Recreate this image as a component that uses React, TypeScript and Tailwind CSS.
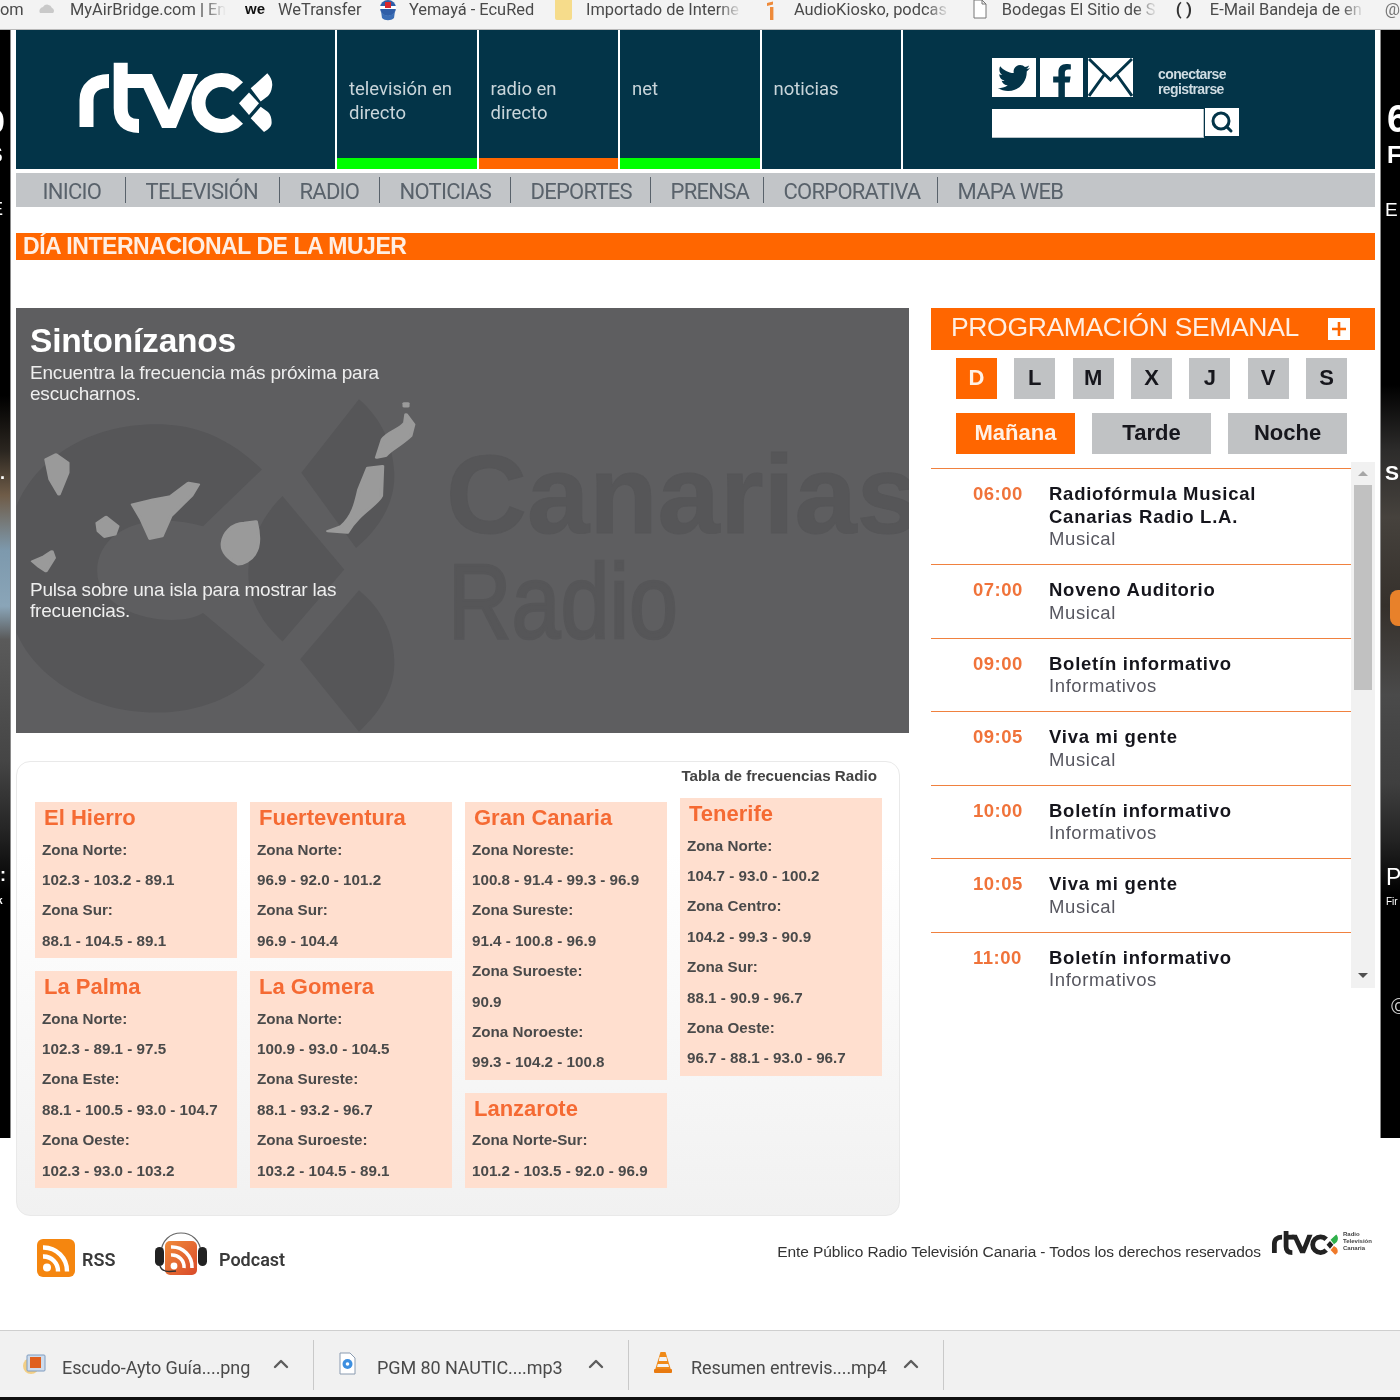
import React from "react";
import { FaTwitter, FaFacebookF } from "react-icons/fa";
import { Search, ChevronUp } from "lucide-react";

const SANS = "font-['Liberation_Sans',Arial,sans-serif]";
const UI = "font-['Roboto','Noto_Sans',sans-serif]";

function Logo({ className, letters, top, mid, bottom }: { className: string; letters: string; top: string; mid: string; bottom: string }) {
  return (
    <svg viewBox="0 0 198 76" className={className} aria-hidden>
      <g fill="none" stroke={letters} strokeWidth="14">
        <path d="M9.5 67V40C9.5 28 18 21 32 21" />
        <path d="M43.7 2.7V48C43.7 60 50 66 62 66" />
        <path d="M38 21H68" />
        <path d="M145 43m16 -16A23 23 0 1 0 161 59" />
      </g>
      <polygon points="60,14 75,14 92,50 106,14 121,14 99,68 85,68" fill={letters} />
      <path d="M173.7 28.3L190.3 13.3C194 17 196 22 195 27C194.5 31 193 34 191 36L183.7 41.5Z" fill={top} />
      <path d="M162 43.3L172 32.5L182 43.3L172 55Z" fill={mid} />
      <path d="M173.7 58.3L183.7 46.7L191 52C194 55 195 60 194.5 64C193.5 68 190 70 187 72Z" fill={bottom} />
    </svg>
  );
}

function Bookmark({ className, children }: { className: string; children: React.ReactNode }) {
  return (
    <span className={`overflow-hidden whitespace-nowrap pt-[1px] text-[16.4px] leading-[18px] text-[#4a4a4a] ${UI} ${className}`}>{children}</span>
  );
}

function BookmarkBar() {
  return (
    <div className="flex h-[30px] items-start border-b border-[#b9b9b9] bg-[#f3f3f3] pt-0">
      <Bookmark className="w-[24px]">om</Bookmark>
      <svg viewBox="0 0 18 12" className="ml-[14px] mt-[3px] h-[12px] w-[18px]" aria-hidden><path d="M2 10a4 4 0 0 1 3-6 5 5 0 0 1 9 1 3 3 0 0 1 1 5Z" fill="#c9c9c9" /></svg>
      <Bookmark className="ml-[14px] w-[156px] [mask-image:linear-gradient(to_right,black_85%,transparent)]">MyAirBridge.com | En</Bookmark>
      <span className={`ml-[19px] w-[22px] text-[15px] font-bold leading-[18px] text-[#111] ${SANS}`}>we</span>
      <Bookmark className="ml-[11px] w-[87px]">WeTransfer</Bookmark>
      <svg viewBox="0 0 20 22" className="ml-[13px] h-[22px] w-[20px]" aria-hidden>
        <circle cx="10" cy="8" r="8" fill="#2f5ea8" /><path d="M2 6h16v3H2z" fill="#fff" /><path d="M3 11c3 6 11 6 14 0l-1 7c-3 3-9 3-12 0Z" fill="#3a6db5" /><path d="M7 2h6v6H7z" fill="#d9262c" />
      </svg>
      <Bookmark className="ml-[11px] w-[130px]">Yemayá - EcuRed</Bookmark>
      <span className="ml-[16px] h-[20px] w-[17px] rounded-b-[2px] bg-[#f6dc8b]" />
      <Bookmark className="ml-[14px] w-[156px] [mask-image:linear-gradient(to_right,black_85%,transparent)]">Importado de Interne</Bookmark>
      <svg viewBox="0 0 10 20" className="ml-[24px] h-[20px] w-[10px]" aria-hidden><path d="M1 3l6-1.5v3l-6 1.5ZM4 7h3.4v13H4Z" fill="#ee8a3a" /></svg>
      <Bookmark className="ml-[18px] w-[156px] [mask-image:linear-gradient(to_right,black_85%,transparent)]">AudioKiosko, podcas</Bookmark>
      <svg viewBox="0 0 14 19" className="ml-[23px] h-[19px] w-[14px]" aria-hidden><path d="M1 0h8l4 4v14H1Z M9 0v4h4" fill="#fff" stroke="#777" /></svg>
      <Bookmark className="ml-[15px] w-[156px] [mask-image:linear-gradient(to_right,black_85%,transparent)]">Bodegas El Sitio de S</Bookmark>
      <span className={`ml-[18px] w-[22px] whitespace-pre text-[17px] font-bold leading-[18px] text-[#333] ${UI}`}>( )</span>
      <Bookmark className="ml-[12px] w-[155px] [mask-image:linear-gradient(to_right,black_85%,transparent)]">E-Mail Bandeja de en</Bookmark>
      <span className={`ml-[20px] text-[17px] leading-[18px] text-[#777] ${UI}`}>@</span>
    </div>
  );
}

function LeftStrip() {
  return (
    <div className={`relative h-[1108px] w-[11px] shrink-0 overflow-hidden border-r border-[#8a8a8a] bg-[linear-gradient(to_bottom,#000_0,#000_33%,#2b2620_38%,#6f5c48_42%,#7d99ad_47%,#8aa5b8_52%,#5a5a5a_55%,#454545_66%,#262626_72%,#000_78%,#000_100%)] font-bold text-white ${SANS}`}>
      <span className="absolute left-[-14px] top-[74px] text-[34px] leading-[34px]">0</span>
      <span className="absolute left-[-12px] top-[114px] text-[22px] leading-[22px]">S</span>
      <span className="absolute left-[-9px] top-[170px] text-[18px] font-normal leading-[18px]">E</span>
      <span className="absolute left-0 top-[434px] text-[18px] leading-[18px]">.</span>
      <span className="absolute left-0 top-[836px] text-[18px] leading-[18px]">:</span>
      <span className="absolute left-[-3px] top-[866px] text-[10px] leading-[10px]">k</span>
    </div>
  );
}

function RightStrip() {
  return (
    <div className={`relative h-[1108px] w-[20px] shrink-0 overflow-hidden border-l border-[#8a8a8a] bg-[linear-gradient(to_bottom,#000_0,#000_32%,#2d2c2b_38%,#46423d_44%,#35302b_52%,#4a4a4a_60%,#3f3f3f_68%,#242424_73%,#000_78%,#000_100%)] font-bold text-white ${SANS}`}>
      <span className="absolute left-[6px] top-[70px] text-[38px] leading-[38px]">6</span>
      <span className="absolute left-[6px] top-[113px] text-[24px] leading-[24px]">F</span>
      <span className="absolute left-[4px] top-[170px] text-[19px] font-normal leading-[19px]">E</span>
      <span className="absolute left-[4px] top-[432px] text-[21px] leading-[21px]">S</span>
      <span className="absolute left-[9px] top-[560px] h-[36px] w-[11px] rounded-l-[8px] bg-[#e8812a]" />
      <span className="absolute left-[5px] top-[836px] text-[23px] font-normal leading-[23px]">P</span>
      <span className="absolute left-[5px] top-[867px] whitespace-nowrap text-[10px] font-normal leading-[10px]">Fir</span>
      <span className="absolute left-[10px] top-[966px] text-[22px] font-normal leading-[22px] text-[#ccc]">©</span>
    </div>
  );
}

function HeaderCol({ label, bar }: { label: React.ReactNode; bar: string }) {
  return (
    <div className="flex h-full w-[139.5px] shrink-0 flex-col justify-between bg-[#033448]">
      <div className={`px-[12px] pt-[47px] text-[18.5px] leading-[24px] text-[#c9d5da] ${UI}`}>{label}</div>
      <div className={`h-[11px] ${bar}`} />
    </div>
  );
}

function Header() {
  return (
    <div className="flex h-[139px] gap-[2px] bg-white">
      <div className="flex w-[319px] shrink-0 items-center justify-center bg-[#033448]">
        <Logo className="h-[76px] w-[198px] -translate-y-[2px]" letters="#fff" top="#fff" mid="#fff" bottom="#fff" />
      </div>
      <HeaderCol label={<>televisión en<br />directo</>} bar="bg-[#00ff00]" />
      <HeaderCol label={<>radio en<br />directo</>} bar="bg-[#ff6600]" />
      <HeaderCol label="net" bar="bg-[#00ff00]" />
      <HeaderCol label="noticias" bar="bg-transparent" />
      <div className="flex-1 bg-[#033448] pl-[89px] pt-[28px]">
        <div className="flex items-start">
          <div className="flex h-[39px] w-[44px] items-center justify-center bg-white text-[#033448]"><FaTwitter className="h-[32px] w-[36px]" /></div>
          <div className="ml-[4px] flex h-[39px] w-[43px] items-end justify-center bg-white text-[#033448]"><FaFacebookF className="h-[33px] w-[22px]" /></div>
          <svg viewBox="0 0 45 39" className="ml-[5px] h-[39px] w-[45px]" aria-hidden>
            <rect width="45" height="39" fill="#fff" />
            <path d="M1 1L22.5 22L44 1M1 38L16 17M44 38L29 17" fill="none" stroke="#033448" strokeWidth="3" />
          </svg>
          <div className={`ml-[25px] mt-[9px] text-[14px] font-bold leading-[15px] tracking-[-0.6px] text-[#cfdce2] ${SANS}`}>conectarse<br />registrarse</div>
        </div>
        <div className="mt-[12px] flex items-start">
          <div className="h-[29px] w-[212px] border-b border-r border-[#b9c3c8] bg-white" />
          <div className="-mt-[1px] ml-[1px] flex h-[28px] w-[34px] items-center justify-center bg-white"><Search className="h-[24px] w-[24px] text-[#033448]" strokeWidth={3} /></div>
        </div>
      </div>
    </div>
  );
}

function Nav() {
  const items: [string, string][] = [
    ["INICIO", "w-[103px]"],
    ["TELEVISIÓN", "w-[154px]"],
    ["RADIO", "w-[100px]"],
    ["NOTICIAS", "w-[131px]"],
    ["DEPORTES", "w-[140px]"],
    ["PRENSA", "w-[113px]"],
    ["CORPORATIVA", "w-[174px]"],
    ["MAPA WEB", "w-[140px]"],
  ];
  return (
    <div className="mt-[4px] flex h-[34px] items-center bg-[#c2c5c8] pl-[7px]">
      {items.map(([t, w], i) => (
        <span key={t} className={`flex h-[26px] items-center whitespace-nowrap pl-[19.5px] pt-[3px] text-[22px] leading-[24px] tracking-[-0.75px] text-[#59626b] ${UI} ${w} ${i < items.length - 1 ? "border-r-[1.5px] border-[#59626b]" : ""}`}>{t}</span>
      ))}
    </div>
  );
}

function MapPanel() {
  return (
    <div className={`relative h-[425px] w-[893px] overflow-hidden bg-[#5e5e60] text-white ${SANS}`}>
      <svg viewBox="27 27 1518 1272" preserveAspectRatio="none" className="absolute inset-0 h-full w-full" aria-hidden>
        <path d="M445 510C380 400 320 375 265 375C150 375 60 480 28 620V1000C60 1130 150 1238 265 1238C345 1238 415 1180 450 1095L345 940C300 990 165 950 165 815C165 700 240 630 345 680Z" fill="#565658" />
        <path d="M610 300L512 520L605 745C650 680 672 600 670 520C668 440 650 360 610 300Z" fill="#565658" />
        <path d="M480 590L585 810L480 1025C440 960 420 890 422 810C424 730 445 650 480 590Z" fill="#565658" />
        <path d="M610 872L510 1078L610 1295C650 1230 672 1160 670 1080C668 1000 650 930 610 872Z" fill="#565658" />
        <g fill="#9a9a9a" stroke="#9a9a9a" strokeWidth="6" strokeLinejoin="round">
          <path d="M78 480L95 465L115 490L115 520L100 585L85 540Z" />
          <path d="M165 670L180 652L200 680L195 705L178 712L167 695Z" />
          <path d="M225 615L260 600L290 590L320 550L337 555L325 590L290 650L275 710L255 718L240 660Z" />
          <path d="M378 730C380 700 395 670 415 670L435 665C440 700 442 740 432 765C425 785 412 795 405 795C390 780 376 760 378 730Z" />
          <path d="M55 785L75 770L88 755L92 775L78 815L65 800Z" />
          <path d="M625 505L650 500L648 590C640 620 610 640 590 700L557 695L580 680C600 650 605 610 610 570Z" />
          <path d="M640 475L650 420C660 395 680 390 688 370L690 345L703 375L698 410C680 440 665 450 655 470Z" />
          <path d="M687 312H693V322H687Z" />
        </g>
      </svg>
      <span className="absolute left-[430px] top-[137px] whitespace-nowrap text-[112px] font-bold leading-[100px] text-[#565658] [-webkit-text-stroke:1px_#565658]">Canarias</span>
      <span className="absolute left-[432px] top-[243px] origin-left scale-x-[0.83] whitespace-nowrap text-[106px] leading-[100px] text-[#565658] [-webkit-text-stroke:2.5px_#565658]">Radio</span>
      <div className="relative px-[14px] pt-[14px]">
        <h2 className="text-[33.5px] font-bold leading-[38px] tracking-[-0.2px]">Sintonízanos</h2>
        <p className="mt-[2px] w-[370px] text-[19px] leading-[21px] tracking-[-0.2px] text-[#eeeeee]">Encuentra la frecuencia más próxima para escucharnos.</p>
        <p className="mt-[175px] w-[340px] text-[19px] leading-[21px] tracking-[-0.2px] text-[#eeeeee]">Pulsa sobre una isla para mostrar las frecuencias.</p>
      </div>
    </div>
  );
}

function Freq({ name, rows, className = "" }: { name: string; rows: string[]; className?: string }) {
  return (
    <div className={`w-[202px] bg-[#ffdfcf] pb-[1.8px] ${className}`}>
      <h3 className="h-[32.6px] pl-[9px] text-[22px] font-bold leading-[32px] text-[#f56a33]">{name}</h3>
      {rows.map((r, i) => (
        <p key={i} className="pl-[7px] text-[15.2px] font-bold leading-[30.4px] text-[#4a4a4a]">{r}</p>
      ))}
    </div>
  );
}

function FreqCard() {
  return (
    <div className={`mt-[28px] h-[455px] w-[884px] rounded-[14px] border border-[#e9e9e9] bg-[linear-gradient(to_bottom,#ffffff_0%,#ffffff_20%,#f1f1f1_100%)] ${SANS}`}>
      <p className="pr-[22px] pt-[4px] text-right text-[15.2px] font-bold leading-[19px] text-[#444]">Tabla de frecuencias Radio</p>
      <div className="ml-[18px] mt-[13px] flex gap-[13px]">
        <div className="mt-[4px] flex flex-col gap-[13px]">
          <Freq name="El Hierro" rows={["Zona Norte:", "102.3 - 103.2 - 89.1", "Zona Sur:", "88.1 - 104.5 - 89.1"]} />
          <Freq name="La Palma" rows={["Zona Norte:", "102.3 - 89.1 - 97.5", "Zona Este:", "88.1 - 100.5 - 93.0 - 104.7", "Zona Oeste:", "102.3 - 93.0 - 103.2"]} />
        </div>
        <div className="mt-[4px] flex flex-col gap-[13px]">
          <Freq name="Fuerteventura" rows={["Zona Norte:", "96.9 - 92.0 - 101.2", "Zona Sur:", "96.9 - 104.4"]} />
          <Freq name="La Gomera" rows={["Zona Norte:", "100.9 - 93.0 - 104.5", "Zona Sureste:", "88.1 - 93.2 - 96.7", "Zona Suroeste:", "103.2 - 104.5 - 89.1"]} />
        </div>
        <div className="mt-[4px] flex flex-col gap-[13px]">
          <Freq name="Gran Canaria" rows={["Zona Noreste:", "100.8 - 91.4 - 99.3 - 96.9", "Zona Sureste:", "91.4 - 100.8 - 96.9", "Zona Suroeste:", "90.9", "Zona Noroeste:", "99.3 - 104.2 - 100.8"]} />
          <Freq name="Lanzarote" rows={["Zona Norte-Sur:", "101.2 - 103.5 - 92.0 - 96.9"]} />
        </div>
        <div>
          <Freq name="Tenerife" rows={["Zona Norte:", "104.7 - 93.0 - 100.2", "Zona Centro:", "104.2 - 99.3 - 90.9", "Zona Sur:", "88.1 - 90.9 - 96.7", "Zona Oeste:", "96.7 - 88.1 - 93.0 - 96.7"]} />
        </div>
      </div>
    </div>
  );
}

function Schedule() {
  const rows: [string, string[], string][] = [
    ["06:00", ["Radiofórmula Musical", "Canarias Radio L.A."], "Musical"],
    ["07:00", ["Noveno Auditorio"], "Musical"],
    ["09:00", ["Boletín informativo"], "Informativos"],
    ["09:05", ["Viva mi gente"], "Musical"],
    ["10:00", ["Boletín informativo"], "Informativos"],
    ["10:05", ["Viva mi gente"], "Musical"],
    ["11:00", ["Boletín informativo"], "Informativos"],
  ];
  return (
    <div className="mt-[8px] flex h-[526px] overflow-hidden">
      <div className="w-[420px] pt-[6px]">
        {rows.map(([time, title, sub]) => (
          <div key={time} className="flex border-t-[1.5px] border-[#f0813f] pb-[13.5px] pt-[14px] leading-[22.5px]">
            <span className="w-[118px] shrink-0 pl-[42px] text-[18.5px] font-bold tracking-[0.5px] text-[#f0733a]">{time}</span>
            <div>
              {title.map((t) => (
                <p key={t} className="text-[18.5px] font-bold tracking-[0.75px] text-[#15151c]">{t}</p>
              ))}
              <p className="text-[18.5px] tracking-[0.6px] text-[#575760]">{sub}</p>
            </div>
          </div>
        ))}
      </div>
      <div className="flex w-[24px] flex-col items-center bg-[#f1f1f1] pt-[9px]">
        <span className="h-0 w-0 border-x-[5px] border-b-[5px] border-x-transparent border-b-[#a6a6a6]" />
        <span className="mt-[9px] h-[205px] w-[18px] bg-[#c1c1c1]" />
        <span className="mt-[283px] h-0 w-0 border-x-[5px] border-t-[5px] border-x-transparent border-t-[#505050]" />
      </div>
    </div>
  );
}

function RightColumn() {
  const days = ["D", "L", "M", "X", "J", "V", "S"];
  return (
    <div className={`ml-[22px] w-[444px] ${SANS}`}>
      <div className="flex h-[42px] items-center bg-[#ff6600] pl-[20px] pr-[25px]">
        <h2 className="flex-1 pb-[5px] text-[26.5px] leading-[32px] tracking-[-0.35px] text-[#ffeee2]">PROGRAMACIÓN SEMANAL</h2>
        <span className="relative flex h-[22px] w-[22px] items-center justify-center bg-white">
          <svg viewBox="0 0 22 22" className="h-[22px] w-[22px]" aria-hidden><path d="M11 4V18M4 11H18" stroke="#ff6600" strokeWidth="2.6" /></svg>
        </span>
      </div>
      <div className="ml-[25px] mt-[8px] flex w-[391px] justify-between">
        {days.map((d, i) => (
          <span key={d} className={`flex h-[41px] w-[41px] items-center justify-center pb-[2px] text-[22px] font-bold leading-none ${i === 0 ? "bg-[#ff6600] text-[#fff1e6]" : "bg-[#c0c2c4] text-[#17171d]"}`}>{d}</span>
        ))}
      </div>
      <div className="ml-[25px] mt-[14px] flex w-[391px] justify-between">
        {["Mañana", "Tarde", "Noche"].map((d, i) => (
          <span key={d} className={`flex h-[41px] w-[119px] items-center justify-center pb-[2px] text-[22px] font-bold leading-none ${i === 0 ? "bg-[#ff6600] text-[#fff1e6]" : "bg-[#c0c2c4] text-[#17171d]"}`}>{d}</span>
        ))}
      </div>
      <Schedule />
    </div>
  );
}

function Footer() {
  return (
    <div className="flex h-[114px] items-start">
      <svg viewBox="0 0 38 38" className="ml-[21px] mt-[23px] h-[38px] w-[38px]" aria-hidden>
        <rect width="38" height="38" rx="6" fill="#f5860f" />
        <circle cx="10" cy="28.5" r="4" fill="#fff" />
        <path d="M6 17.5a14.5 14.5 0 0 1 15 15M6 8.5a23.5 23.5 0 0 1 24 24" fill="none" stroke="#fff" strokeWidth="4.4" />
      </svg>
      <span className={`ml-[7px] mt-[32px] w-[34px] text-[18px] font-semibold leading-[24px] text-[#3a3a3a] ${UI}`}>RSS</span>
      <svg viewBox="0 0 54 48" className="ml-[38px] mt-[14px] h-[48px] w-[54px]" aria-hidden>
        <defs><linearGradient id="pod" x1="0" y1="0" x2="1" y2="1"><stop offset="0" stopColor="#f08a3a" /><stop offset="1" stopColor="#d94a2a" /></linearGradient></defs>
        <path d="M7 24C7 -4 47 -4 47 24" fill="none" stroke="#666" strokeWidth="1.2" />
        <rect x="11" y="11" width="32" height="34" rx="5" fill="url(#pod)" />
        <circle cx="20" cy="36" r="3.4" fill="#fff" />
        <path d="M17 25a12 12 0 0 1 13 13M17 17a20 20 0 0 1 21 21" fill="none" stroke="#fff" strokeWidth="3.6" />
        <rect x="1" y="17" width="9" height="19" rx="4.5" fill="#222" />
        <rect x="44" y="17" width="9" height="19" rx="4.5" fill="#222" />
        <path d="M6 36C8 42 14 42 22 41" fill="none" stroke="#333" strokeWidth="1.5" />
      </svg>
      <span className={`ml-[11px] mt-[32px] text-[18px] font-semibold leading-[24px] text-[#3a3a3a] ${UI}`}>Podcast</span>
      <div className="ml-auto mt-[14px] flex items-start">
        <span className={`mt-[13px] whitespace-nowrap text-[15.5px] leading-[18px] tracking-[-0.1px] text-[#333] ${SANS}`}>Ente Público Radio Televisión Canaria - Todos los derechos reservados</span>
        <Logo className="ml-[10px] h-[26px] w-[68px]" letters="#222" top="#2fb04a" mid="#222" bottom="#f07a2a" />
        <span className={`ml-[4px] mt-[1px] w-[32px] text-[6px] font-bold leading-[7px] text-[#444] ${SANS}`}>Radio<br />Televisión<br />Canaria</span>
      </div>
    </div>
  );
}

function DownloadItem({ icon, name, className }: { icon: React.ReactNode; name: string; className: string }) {
  return (
    <div className={`flex h-[50px] items-center border-r border-[#c9c9c9] ${className}`}>
      <div className="flex h-[26px] w-[40px] shrink-0 items-start">{icon}</div>
      <span className={`whitespace-nowrap pt-[6px] text-[18px] leading-[24px] tracking-[-0.08px] text-[#4a4a4a] ${UI}`}>{name}</span>
      <ChevronUp className="ml-auto -mt-[3px] h-[24px] w-[24px] text-[#5d5d5d]" strokeWidth={2.4} />
    </div>
  );
}

function Downloads() {
  return (
    <div className="flex h-[70px] items-start border-t border-[#cfcfcf] border-b-[3px] border-b-[#111] bg-[#f1f1f1] pt-[9px]">
      <DownloadItem className="w-[314px] pl-[22px] pr-[20px]" name="Escudo-Ayto Guía....png" icon={
        <svg viewBox="0 0 24 24" className="h-[24px] w-[24px]" aria-hidden>
          <circle cx="9" cy="14" r="8" fill="#f3cf85" />
          <rect x="5" y="3" width="18" height="16" rx="1" fill="#cfdcec" stroke="#7f9cc0" />
          <rect x="8" y="5" width="11" height="11" fill="#e0601f" />
        </svg>} />
      <DownloadItem className="w-[315px] pl-[23px] pr-[20px]" name="PGM 80 NAUTIC....mp3" icon={
        <svg viewBox="0 0 17 23" className="h-[23px] w-[17px] translate-x-[2px]" aria-hidden>
          <path d="M1 1h10l5 5v16H1Z" fill="#fff" stroke="#8a9bb0" />
          <circle cx="8.5" cy="12" r="5" fill="#3d8fe0" />
          <circle cx="8.5" cy="12" r="1.8" fill="#fff" />
        </svg>} />
      <DownloadItem className="w-[315px] pl-[22px] pr-[20px]" name="Resumen entrevis....mp4" icon={
        <svg viewBox="0 0 18 22" className="h-[22px] w-[18px] translate-x-[3px]" aria-hidden>
          <path d="M6.5 0H11.5L17 18H1Z" fill="#f08a17" />
          <path d="M5.6 5H12.4L13.2 9H4.8ZM3.8 12H14.2L15 15H3Z" fill="#f3f3f3" />
          <rect y="17" width="18" height="4" rx="1" fill="#e87a10" />
        </svg>} />
    </div>
  );
}

export default function App() {
  return (
    <div className="h-[1400px] w-[1400px] overflow-hidden bg-white blur-[0.5px]">
      <BookmarkBar />
      <div className="flex h-[1300px] items-start">
        <LeftStrip />
        <main className={`ml-[5px] mr-[5px] w-[1359px] ${SANS}`}>
          <Header />
          <Nav />
          <div className={`mt-[26px] h-[27px] bg-[#ff6600] pl-[7px] text-[23px] font-bold leading-[26px] tracking-[-0.45px] text-[#ffeee2]`}>DÍA INTERNACIONAL DE LA MUJER</div>
          <div className="mt-[48px] flex items-start">
            <div>
              <MapPanel />
              <FreqCard />
            </div>
            <RightColumn />
          </div>
          <Footer />
        </main>
        <RightStrip />
      </div>
      <Downloads />
    </div>
  );
}
